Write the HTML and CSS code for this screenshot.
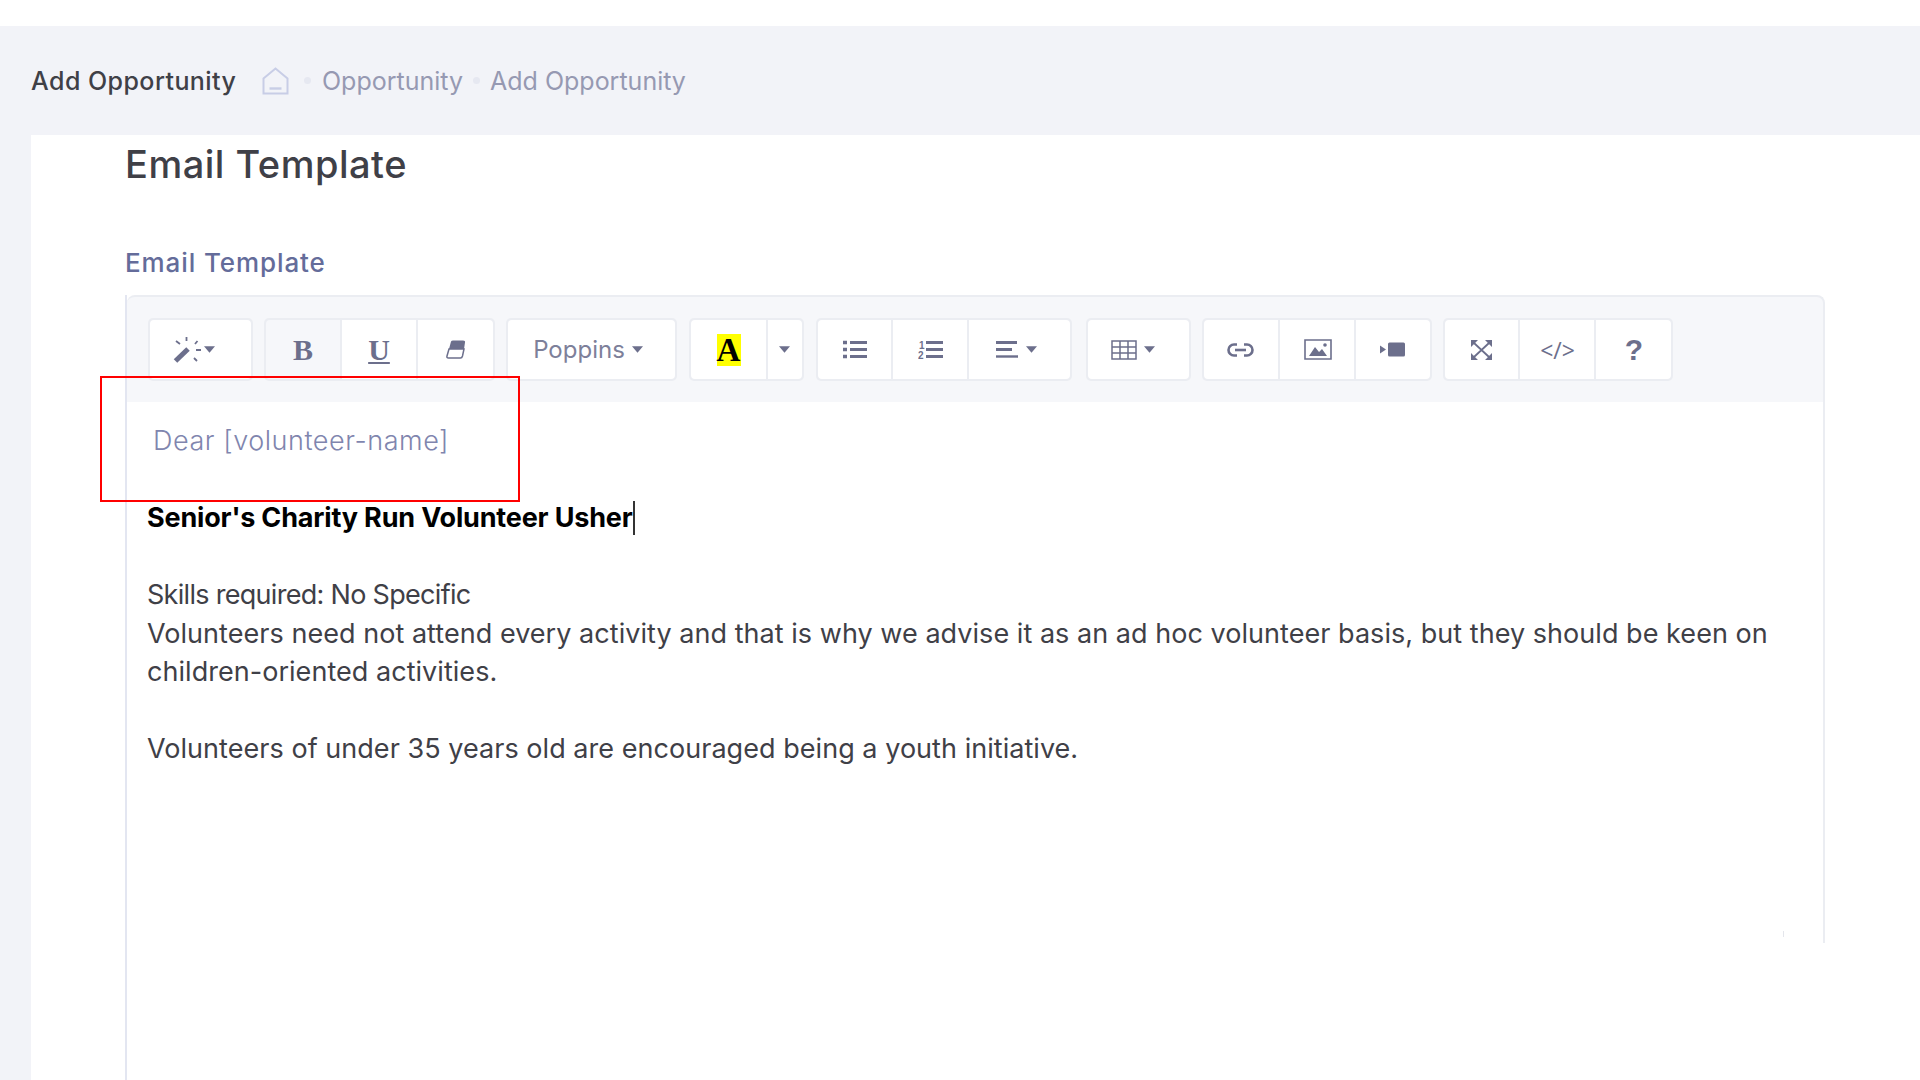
FILE: index.html
```html
<!DOCTYPE html>
<html lang="en">
<head>
<meta charset="utf-8">
<title>Add Opportunity</title>
<link rel="stylesheet" href="styles.css">
</head>
<body>
<header class="topbar"></header>
<section class="subheader">
  <h2 class="page-title">Add Opportunity</h2>
  <svg class="home" width="27" height="28" viewBox="0 0 27 28"><path d="M1.5 26.5V11.5L13.5 1.5L25.5 11.5V26.5Z" fill="none" stroke="#c8cde6" stroke-width="2"/><path d="M7.5 21.5H19.5" stroke="#c8cde6" stroke-width="2.4"/></svg>
  <span class="dot first"></span>
  <a class="crumb c1">Opportunity</a>
  <span class="dot"></span>
  <a class="crumb c2">Add Opportunity</a>
</section>
<main class="content">
  <article class="card">
    <h1 class="heading">Email Template</h1>
    <label class="label">Email Template</label>
    <div class="editor">
      <div class="toolbar">
        <div class="group"><button class="btn w-magic">
          <svg width="28" height="27" viewBox="0 0 28 27"><path d="M2.5 25L15 13" stroke="#6c6f8c" stroke-width="5"/><path d="M13.5 1V5M3 5L7 8M24.5 5L22 8M23 14H28M21 22L24 25" stroke="#6c6f8c" stroke-width="1.8" fill="none"/></svg>
          <svg class="caret" width="11" height="7" viewBox="0 0 10 6"><path d="M0 0H10L5 6Z"/></svg></button></div>
        <div class="group tight">
          <button class="btn w-b active"><span class="serif">B</span></button>
          <button class="btn w-u"><span class="serif under">U</span></button>
          <button class="btn w-e"><svg width="20" height="19" viewBox="0 0 20 19"><path d="M5 1.5Q5.5 0.5 7 0.5H17Q19.5 0.5 19 2.5L18 9H3Z" fill="#6c6f8c"/><path d="M3 9H18L16.5 16Q16 18 14.500 18H2.500Q0.500 18 1 16Z" fill="#fff" stroke="#6c6f8c" stroke-width="1.500"/></svg></button>
        </div>
        <div class="group tight"><button class="btn w-font"><span class="font-name">Poppins</span><svg class="caret" width="11" height="7" viewBox="0 0 10 6"><path d="M0 0H10L5 6Z"/></svg></button></div>
        <div class="group">
          <button class="btn w-color"><span class="color-a">A</span></button>
          <button class="btn w-colorc"><svg class="caret" width="11" height="7" viewBox="0 0 10 6"><path d="M0 0H10L5 6Z"/></svg></button>
        </div>
        <div class="group">
          <button class="btn w-ul"><svg width="24" height="19" viewBox="0 0 24 19"><path d="M0 2.500H4M0 9.500H4M0 16.500H4" stroke="#6c6f8c" stroke-width="3.500"/><path d="M7 2.500H24M7 9.500H24M7 16.500H24" stroke="#6c6f8c" stroke-width="3"/></svg></button>
          <button class="btn w-ol"><svg width="25" height="20" viewBox="0 0 25 20"><text x="1" y="9" class="num">1</text><text x="0" y="19" class="num">2</text><path d="M8 2.500H25M8 9.500H25M8 16.500H25" stroke="#6c6f8c" stroke-width="3"/></svg></button>
          <button class="btn w-al"><svg width="22" height="17" viewBox="0 0 22 17"><path d="M0 1.500H21M0 8.500H16" stroke="#6c6f8c" stroke-width="3"/><path d="M0 15.500H22" stroke="#6c6f8c" stroke-width="2.400"/></svg><svg class="caret" width="11" height="7" viewBox="0 0 10 6"><path d="M0 0H10L5 6Z"/></svg></button>
        </div>
        <div class="group spaced"><button class="btn w-table"><svg width="26" height="20" viewBox="0 0 26 20"><path d="M1 1H25V19H1ZM1 7H25M1 13H25M9 1V19M17 1V19" fill="none" stroke="#6c6f8c" stroke-width="1.500"/></svg><svg class="caret" width="11" height="7" viewBox="0 0 10 6"><path d="M0 0H10L5 6Z"/></svg></button></div>
        <div class="group tight">
          <button class="btn w-link"><svg width="27" height="14" viewBox="0 0 27 14"><path d="M10 1.500H7A5.500 5.500 0 0 0 7 12.500H10M17 1.500H20A5.500 5.500 0 0 1 20 12.500H17" fill="none" stroke="#6c6f8c" stroke-width="2.600"/><path d="M8 7H19" stroke="#6c6f8c" stroke-width="2.600"/></svg></button>
          <button class="btn w-img"><svg width="28" height="21" viewBox="0 0 28 21"><path d="M1 1H27V20H1Z" fill="none" stroke="#6c6f8c" stroke-width="1.600"/><path d="M5 17L11 8L15 13L18 10L23 17Z" fill="#6c6f8c"/><circle cx="21" cy="6" r="1.800" fill="#6c6f8c"/></svg></button>
          <button class="btn w-vid"><svg width="25" height="15" viewBox="0 0 25 15"><path d="M0 3.500L6 7.500L0 11.500Z" fill="#6c6f8c"/><rect x="8" y="0.500" width="17" height="14" rx="1.500" fill="#6c6f8c"/></svg></button>
        </div>
        <div class="group tight">
          <button class="btn w-full"><svg width="21" height="20" viewBox="0 0 21 20"><path d="M0 0H7L0 7ZM21 0H14L21 7ZM0 20H7L0 13ZM21 20H14L21 13Z" fill="#6c6f8c"/><path d="M3 3L18 17M18 3L3 17" stroke="#6c6f8c" stroke-width="1.800"/></svg></button>
          <button class="btn w-code"><span class="code">&lt;/&gt;</span></button>
          <button class="btn w-help"><span class="help">?</span></button>
        </div>
      </div>
      <div class="body">
        <p class="dear">Dear [volunteer-name]</p>
        <p class="gap"><strong class="strong">Senior's Charity Run Volunteer Usher</strong><span class="cursor"></span></p>
        <p class="gap"><span class="skills">Skills required: No Specific</span><br>Volunteers need not attend every activity and that is why we advise it as an ad hoc volunteer basis, but they should be keen on<br>children-oriented activities.</p>
        <p class="gap">Volunteers of under 35 years old are encouraged being a youth initiative.</p>
      </div>
      <div class="highlight"></div>
      <div class="speck"></div>
    </div>
  </article>
</main>
</body>
</html>
```

FILE: styles.css
```css
* { box-sizing: border-box; }
html, body { margin: 0; height: 1080px; overflow: hidden; }
body {
  display: flex;
  flex-direction: column;
  background: #f2f3f8;
  font-family: Inter, "Noto Sans", sans-serif;
  color: #3f4047;
}
.topbar { height: 26px; background: #fff; flex: none; }
.subheader {
  height: 109px;
  flex: none;
  display: flex;
  align-items: center;
  padding-left: 31px;
}
.page-title { margin: 0; font-size: 25px; font-weight: 500; letter-spacing: 0.45px; width: 231px; color: #3f4047; white-space: nowrap; }
.home { flex: none; }
.dot { width: 7px; height: 7px; border-radius: 50%; background: #e6e8f1; margin: 0 10px 0 10px; flex: none; }
.dot.first { margin: 0 11px 0 15px; }
.crumb { font-size: 25px; color: #9699b2; white-space: nowrap; }
.c1 { width: 141px; }
.content { flex: 1; padding-left: 31px; min-height: 0; }
.card { height: 100%; background: #fff; padding-left: 94px; display: flex; flex-direction: column; }
.heading { margin: 0; font-size: 38px; line-height: 56px; font-weight: 500; color: #3f4047; letter-spacing: 0.5px; height: 102px; padding-top: 1px; }
.label { font-size: 26px; line-height: 52px; height: 58px; font-weight: 500; color: #646c9a; letter-spacing: 0.9px; }
.editor {
  position: relative;
  flex: 1;
  width: 1700px;
  border-left: 2px solid #e3e6f1;
}
.toolbar {
  height: 107px;
  display: flex;
  gap: 12px;
  padding: 21px 0 0 21px;
  background: #f6f7fa;
  border-top: 2px solid #ebedf2;
  border-right: 2px solid #ebedf2;
  border-top-left-radius: 8px;
  border-top-right-radius: 8px;
}
.group { display: flex; height: 63px; background: #ebedf2; gap: 2px; padding: 2px; border-radius: 5px; }
.spaced { margin-left: 2px; }
.tight { margin-left: -1px; }
.btn {
  border: 0;
  padding: 0;
  background: #fff;
  display: flex;
  align-items: center;
  justify-content: center;
  gap: 4px;
  height: 100%;
  color: #6c6f8c;
  font: inherit;
}
.group .btn:first-child { border-radius: 4px 0 0 4px; }
.group .btn:last-child { border-radius: 0 4px 4px 0; }
.group .btn:only-child { border-radius: 4px; }
.btn.active { background: #f6f7fa; }
.caret path { fill: #6c6f8c; }
.w-magic { width: 101px; gap: 3px; padding-right: 14px; }
.w-b { width: 74px; }
.w-u { width: 74px; }
.w-e { width: 75px; }
.w-font { width: 167px; gap: 7px; padding-right: 7px; }
.w-color { width: 75px; }
.w-colorc { width: 34px; padding-right: 1px; }
.w-ul { width: 73px; }
.w-ol { width: 74px; }
.w-al { width: 101px; gap: 8px; padding-right: 6px; }
.w-table { width: 101px; gap: 7px; padding-right: 11px; }
.w-link { width: 74px; padding-right: 2px; }
.w-img { width: 74px; padding-left: 1px; }
.w-vid { width: 74px; padding-right: 2px; }
.w-full { width: 73px; }
.w-code { width: 74px; padding-left: 1px; }
.w-help { width: 75px; padding-left: 1px; }
.serif { font-family: "Liberation Serif", serif; font-weight: 700; font-size: 30px; line-height: 30px; }
.under { text-decoration: underline; text-decoration-thickness: 2px; text-underline-offset: 2px; }
.font-name { font-size: 24px; color: #7d809a; }
.color-a { font-family: "Liberation Serif", serif; font-weight: 700; font-size: 33px; line-height: 32px; width: 24px; text-align: center; background: #ff0; color: #000; }
.num { font-family: "Liberation Sans", sans-serif; font-size: 10px; font-weight: 700; fill: #6c6f8c; }
.code { font-family: "Open Sans", sans-serif; font-size: 23px; }
.help { font-family: "Liberation Sans", sans-serif; font-weight: 700; font-size: 30px; }
.body {
  height: 541px;
  background: #fff;
  border-right: 2px solid #ebedf2;
  padding: 20px 0 0 20px;
  font-size: 27px;
  line-height: 38.5px;
  color: #3f4047;
  letter-spacing: 0.04px;
}
.body p { margin: 0; }
.body .gap { margin-top: 38.5px; white-space: nowrap; }
.dear { padding-left: 6px; font-weight: 300; color: #8085ae; letter-spacing: 0.55px; }
.strong { font-weight: 700; color: #000; letter-spacing: -0.17px; }
.skills { letter-spacing: -0.7px; }
.cursor { display: inline-block; width: 2px; height: 34px; background: #333; vertical-align: -8px; }
.highlight {
  position: absolute;
  left: -27px;
  top: 81px;
  width: 420px;
  height: 126px;
  border: 2px solid #f00;
  pointer-events: none;
}
.speck {
  position: absolute;
  left: 1656px;
  top: 636px;
  width: 1px;
  height: 6px;
  background: #e4e6ec;
}
```
